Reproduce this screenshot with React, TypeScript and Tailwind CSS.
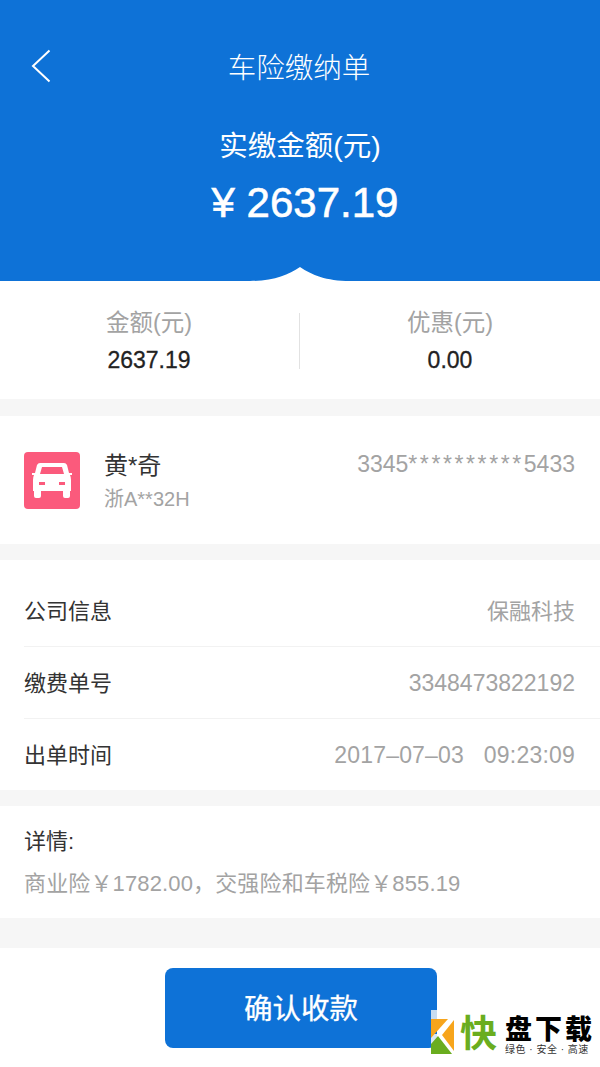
const FONT = "font-['Liberation_Sans','Noto_Sans_CJK_SC',sans-serif]";

function InfoRow({ label, value, last, valueClass }: { label: string; value: string; last?: boolean; valueClass: string }) {
  return (
    <div className={`flex items-center justify-between pr-[25px] pt-[2px] ${last ? "h-[71px]" : "h-[72px] border-b border-[#f2f2f2]"}`}>
      <span className="text-[22px] text-[#333]">{label}</span>
      <span className={`${valueClass} text-[#a3a3a3] whitespace-pre`}>{value}</span>
    </div>
  );
}

export default function App() {
  return (
    <main className={`relative flex h-[1067px] w-[600px] flex-col overflow-hidden bg-[#f6f6f6] ${FONT}`}>
      <header className="relative h-[281px] shrink-0 bg-[#0e72d7] text-white">
        <div className="relative flex h-[132px] items-center justify-center pt-[4px]">
          <svg className="absolute left-[30px] top-[49px]" width="22" height="34" viewBox="0 0 22 34" fill="none">
            <path d="M19.5 1.5 L3 17 L19.5 32.5" stroke="white" strokeWidth="2" />
          </svg>
          <h1 className="pr-[2px] text-[28.5px] font-light">车险缴纳单</h1>
        </div>
        <p className="text-center text-[28.5px] leading-[28px]">实缴金额(元)</p>
        <p className="mt-[18px] pl-[10px] text-center text-[42px] leading-[50px] [-webkit-text-stroke:0.6px_white]">¥ 2637.19</p>
        <svg className="absolute bottom-0 left-[250px]" width="100" height="14" viewBox="0 0 100 14">
          <path d="M0 14 C24 14 38 8 50 0 C62 8 76 14 100 14 Z" fill="white" />
        </svg>
      </header>

      <section className="flex h-[118px] shrink-0 items-center bg-white pt-[3px]">
        <div className="flex w-[299px] flex-col items-center pr-[1px]">
          <span className="text-[23.5px] leading-[30px] text-[#a3a3a3]">金额(元)</span>
          <span className="mt-[6px] text-[23px] leading-[32px] text-[#222] [-webkit-text-stroke:0.3px_#222]">2637.19</span>
        </div>
        <div className="h-[56px] w-px -translate-y-[1px] bg-[#e2e2e2]" />
        <div className="flex flex-1 flex-col items-center">
          <span className="text-[23.5px] leading-[30px] text-[#a3a3a3]">优惠(元)</span>
          <span className="mt-[6px] text-[23px] leading-[32px] text-[#222] [-webkit-text-stroke:0.3px_#222]">0.00</span>
        </div>
      </section>

      <section className="mt-[17px] flex h-[128px] shrink-0 bg-white pl-6 pr-[25px]">
        <div className="mt-[36px] flex h-[57px] w-[56px] items-center justify-center rounded-[4px] bg-[#fb5a7c]">
          <svg width="40" height="35" viewBox="0 0 40 35" fill="white">
            <path
              fillRule="evenodd"
              d="M8 0 H32 Q34 0 35 2 L37 10 H40 V12 H38 Q39 14 39 17 V28 H38 V33 Q38 35 36 35 H33 Q31 35 31 33 V28 H9 V33 Q9 35 7 35 H4 Q2 35 2 33 V28 H1 V17 Q1 14 2 12 H0 V10 H3 L5 2 Q6 0 8 0 Z M10 4 L8 11 H32 L30 4 Z M7 19 V22 H13 V19 Z M27 19 V22 H33 V19 Z"
            />
          </svg>
        </div>
        <div className="ml-6 mt-[35px] flex flex-col">
          <span className="text-[24px] leading-[30px] text-[#333]">黄*奇</span>
          <span className="mt-[5px] text-[20px] leading-[26px] text-[#a3a3a3]">浙A**32H</span>
        </div>
        <span className="ml-auto mt-[33px] text-[23px] leading-[30px] text-[#a3a3a3]">
          3345<span className="tracking-[2.6px]">**********</span>5433
        </span>
      </section>

      <section className="mt-[16px] shrink-0 bg-white pl-6 pt-[15px]">
        <InfoRow label="公司信息" value="保融科技" valueClass="text-[22px]" />
        <InfoRow label="缴费单号" value="3348473822192" valueClass="text-[23px]" />
        <InfoRow label="出单时间" value="2017–07–03   09:23:09" valueClass="text-[23px] tracking-[0.2px]" last />
      </section>

      <section className="mt-[16px] h-[112px] shrink-0 bg-white pl-6 pt-[22px]">
        <p className="text-[22px] leading-[28px] text-[#333]">详情:</p>
        <p className="mt-[14px] text-[22px] leading-[28px] tracking-[0.14px] text-[#a3a3a3]">商业险￥1782.00，交强险和车税险￥855.19</p>
      </section>

      <section className="mt-[30px] flex flex-1 justify-center bg-white pl-[2px] pt-[20px]">
        <button className="h-[80px] w-[272px] rounded-[8px] bg-[#0e72d7] pt-[3px] text-[28.5px] text-white [-webkit-text-stroke:0.3px_white]">确认收款</button>
      </section>

      <div className="absolute left-[431px] top-[1010px] flex items-start">
        <svg width="23" height="44" viewBox="0 0 23 44">
          <rect x="0" y="0" width="6" height="10" fill="#c8dcf0" />
          <rect x="0" y="24" width="6" height="10" fill="#d8e6f2" />
          <path d="M0 9 H17 L0 28 Z" fill="#f7a51c" />
          <path d="M23 10 V41 L11 25 Z" fill="#f7a51c" />
          <path d="M0 44 V34 L7 26 L21 44 Z" fill="#6aad1f" />
        </svg>
        <span className="ml-[6px] mt-[4px] text-[37px] leading-[42px] font-bold text-[#6aad1f]">快</span>
        <div className="ml-[8px] mt-[6px] flex flex-col">
          <span className="text-[27px] leading-[28px] font-black tracking-[3px] text-black">盘下载</span>
          <span className="text-[10px] leading-[12px] tracking-[0.5px] text-[#333]">绿色 · 安全 · 高速</span>
        </div>
      </div>
    </main>
  );
}
